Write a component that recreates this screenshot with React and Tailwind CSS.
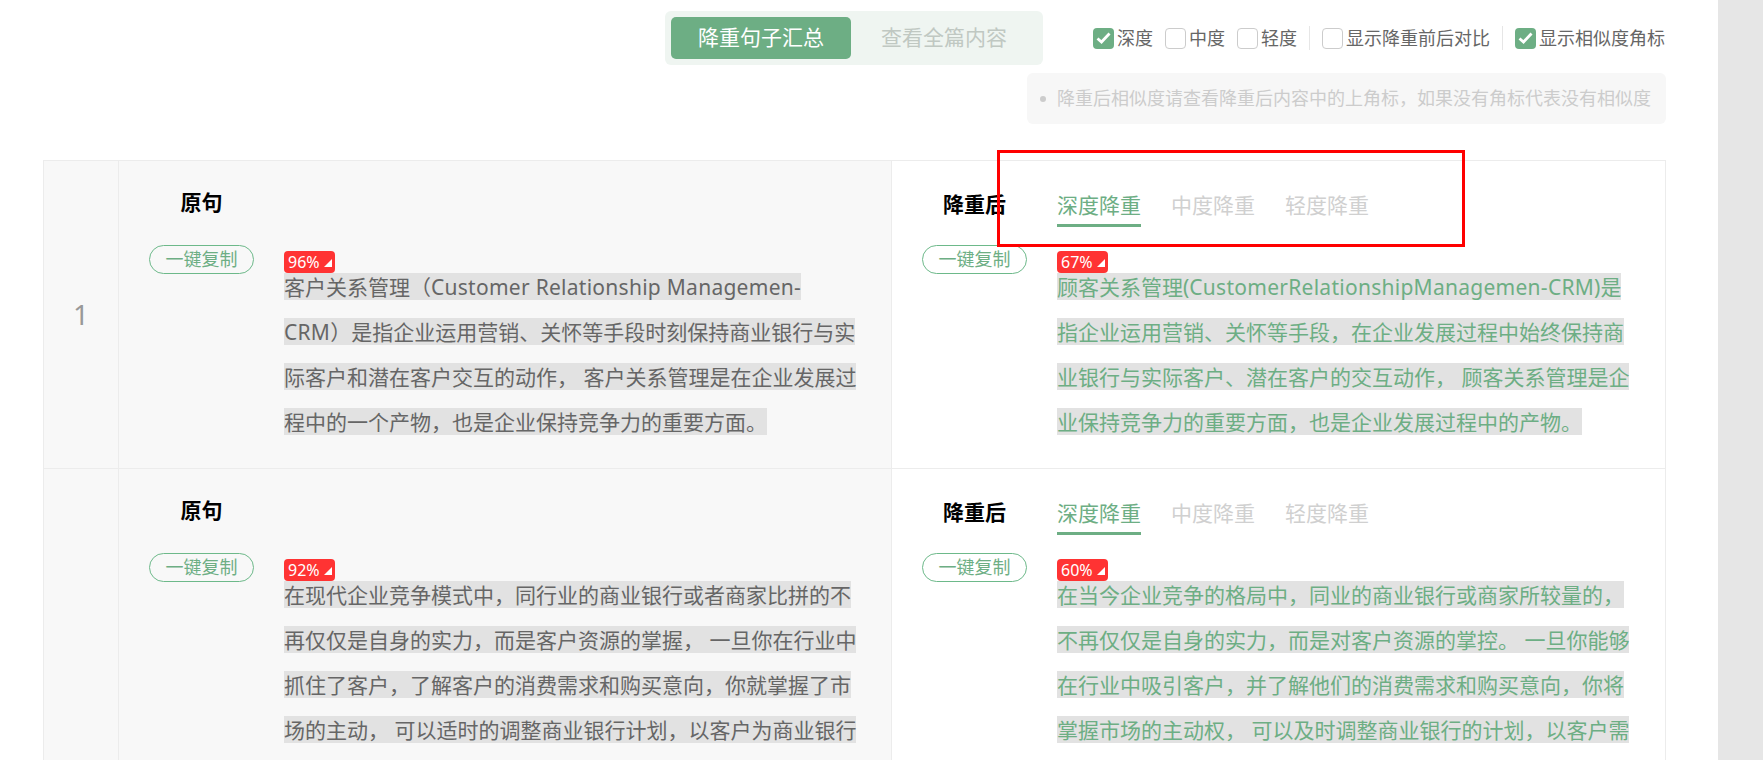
const rows = [
    {
        leftPct: '96%',
        rightPct: '67%',
        left: [
            '客户关系管理（Customer Relationship Managemen-',
            'CRM）是指企业运用营销、关怀等手段时刻保持商业银行与实',
            '际客户和潜在客户交互的动作， 客户关系管理是在企业发展过',
            '程中的一个产物，也是企业保持竞争力的重要方面。',
        ],
        right: [
            '顾客关系管理(CustomerRelationshipManagemen-CRM)是',
            '指企业运用营销、关怀等手段，在企业发展过程中始终保持商',
            '业银行与实际客户、潜在客户的交互动作， 顾客关系管理是企',
            '业保持竞争力的重要方面，也是企业发展过程中的产物。',
        ],
    },
    {
        leftPct: '92%',
        rightPct: '60%',
        left: [
            '在现代企业竞争模式中，同行业的商业银行或者商家比拼的不',
            '再仅仅是自身的实力，而是客户资源的掌握， 一旦你在行业中',
            '抓住了客户，了解客户的消费需求和购买意向，你就掌握了市',
            '场的主动， 可以适时的调整商业银行计划，以客户为商业银行',
        ],
        right: [
            '在当今企业竞争的格局中，同业的商业银行或商家所较量的，',
            '不再仅仅是自身的实力，而是对客户资源的掌控。 一旦你能够',
            '在行业中吸引客户，并了解他们的消费需求和购买意向，你将',
            '掌握市场的主动权， 可以及时调整商业银行的计划，以客户需',
        ],
    },
];

function Option({ label, checked, className = '' }) {
    return (
        <label className={'flex items-center gap-[3px] ' + className}>
            {checked ? (
                <span className="flex h-[21px] w-[21px] items-center justify-center rounded-[4px] bg-[#6dae84]">
                    <svg width="15" height="12" viewBox="0 0 15 12" fill="none">
                        <path d="M1.5 6.5L5.5 10L13.5 1.5" stroke="#ffffff" strokeWidth="2.8" />
                    </svg>
                </span>
            ) : (
                <span className="h-[21px] w-[21px] rounded-[4px] border border-[#cccccc] bg-white" />
            )}
            <span className="text-[18px] leading-[21px] text-[#666666]">{label}</span>
        </label>
    );
}

function CopyButton() {
    return (
        <button
            type="button"
            className="h-[29px] w-[105px] shrink-0 rounded-full border border-[#6db98a] pb-[2px] text-[18px] leading-[24px] text-[#6dae84]"
        >
            一键复制
        </button>
    );
}

function Badge({ value }) {
    return (
        <div className="flex h-[22px] w-[51px] items-center gap-[4px] rounded-[4px] bg-[#ff3333] pl-[4px] text-[16px] leading-[22px] text-white">
            {value}
            <svg className="mt-[2px] shrink-0" width="8" height="8" viewBox="0 0 8 8">
                <path d="M8 0V8H0Z" fill="#ffffff" />
            </svg>
        </div>
    );
}

// latin runs sit a bit wider in the original font
function LineText({ text }) {
    return text.split(/([A-Za-z][A-Za-z -]*)/).map((part, i) =>
        i % 2 === 1 ? (
            <span key={i} className="tracking-[0.27px]">
                {part}
            </span>
        ) : (
            part
        ),
    );
}

function Lines({ lines, pct, color }) {
    return (
        <div className="pt-[6px]">
            <Badge value={pct} />
            <div className="flex flex-col gap-[18px]">
                {lines.map((line) => (
                    <div
                        key={line}
                        className={'h-[27px] w-fit whitespace-pre bg-[#e2e2e2] text-[21px] leading-[29px] ' + color}
                    >
                        <LineText text={line} />
                    </div>
                ))}
            </div>
        </div>
    );
}

function Row({ row, index }) {
    return (
        <div className="flex border-b border-[#ececec]">
            <div className="flex w-[75px] shrink-0 items-center justify-center border-r border-[#ececec] bg-[#f8f8f8] pb-[2px] text-[28px] text-[#999999]">
                {index === 0 ? '1' : ''}
            </div>
            <div className="w-[773px] shrink-0 border-r border-[#ececec] bg-[#f8f8f8] pb-[33px] pl-[30px]">
                <div className="h-[84px] w-[105px] pt-[26px] text-center text-[21px] leading-[30px] font-bold text-black">
                    原句
                </div>
                <div className="flex gap-[30px]">
                    <CopyButton />
                    <Lines lines={row.left} pct={row.leftPct} color="text-[#666666]" />
                </div>
            </div>
            <div className="flex-1 bg-white pb-[33px] pl-[30px]">
                <div className="flex h-[84px] gap-[30px]">
                    <div className="w-[105px] pt-[28px] text-center text-[21px] leading-[30px] font-bold text-black">
                        降重后
                    </div>
                    <div className="flex items-start gap-[30px] pt-[29px] text-[21px] leading-[30px] text-[#d0d0d0]">
                        <span className="h-[37px] border-b-[3px] border-[#6dae84] text-[#6dae84]">深度降重</span>
                        <span>中度降重</span>
                        <span>轻度降重</span>
                    </div>
                </div>
                <div className="flex gap-[30px]">
                    <CopyButton />
                    <Lines lines={row.right} pct={row.rightPct} color="text-[#6dae84]" />
                </div>
            </div>
        </div>
    );
}

export default function App() {
    return (
        <div className="flex h-[760px] overflow-hidden bg-white font-['Noto_Sans','Noto_Sans_CJK_SC',sans-serif]">
            <div className="relative flex-1 pr-[52px] pl-[43px]">
                <div className="flex items-start justify-end pt-[11px]">
                    <div className="mr-[50px] flex h-[54px] w-[378px] items-center rounded-[6px] bg-[#eff5f1] px-[6px] text-[21px]">
                        <div className="flex h-[42px] w-[180px] items-center justify-center rounded-[5px] bg-[#6dae84] text-white">
                            降重句子汇总
                        </div>
                        <div className="flex h-[42px] flex-1 items-center justify-center text-[#c0c8c2]">
                            查看全篇内容
                        </div>
                    </div>
                    <div className="flex h-[54px] items-center pr-px">
                        <Option label="深度" checked />
                        <Option label="中度" className="ml-[12px]" />
                        <Option label="轻度" className="ml-[12px]" />
                        <div className="mx-[12px] h-[24px] w-px bg-[#e6e6e6]" />
                        <Option label="显示降重前后对比" />
                        <div className="mx-[12px] h-[24px] w-px bg-[#e6e6e6]" />
                        <Option label="显示相似度角标" checked />
                    </div>
                </div>
                <div className="mt-[8px] flex justify-end">
                    <div className="flex h-[51px] w-[639px] items-center gap-[11px] rounded-[6px] bg-[#f7f7f7] pl-[13px] text-[18px] text-[#cccccc]">
                        <span className="h-[6px] w-[6px] rounded-full bg-[#cccccc]" />
                        降重后相似度请查看降重后内容中的上角标，如果没有角标代表没有相似度
                    </div>
                </div>
                <div className="mt-[36px] border-t border-l border-r border-[#ececec]">
                    {rows.map((row, index) => (
                        <Row key={row.leftPct} row={row} index={index} />
                    ))}
                </div>
                <div className="absolute top-[150px] left-[997px] h-[97px] w-[468px] border-[3px] border-[#ff0000]" />
            </div>
            <div className="w-[45px] shrink-0 bg-[#e6e6e6]" />
        </div>
    );
}
